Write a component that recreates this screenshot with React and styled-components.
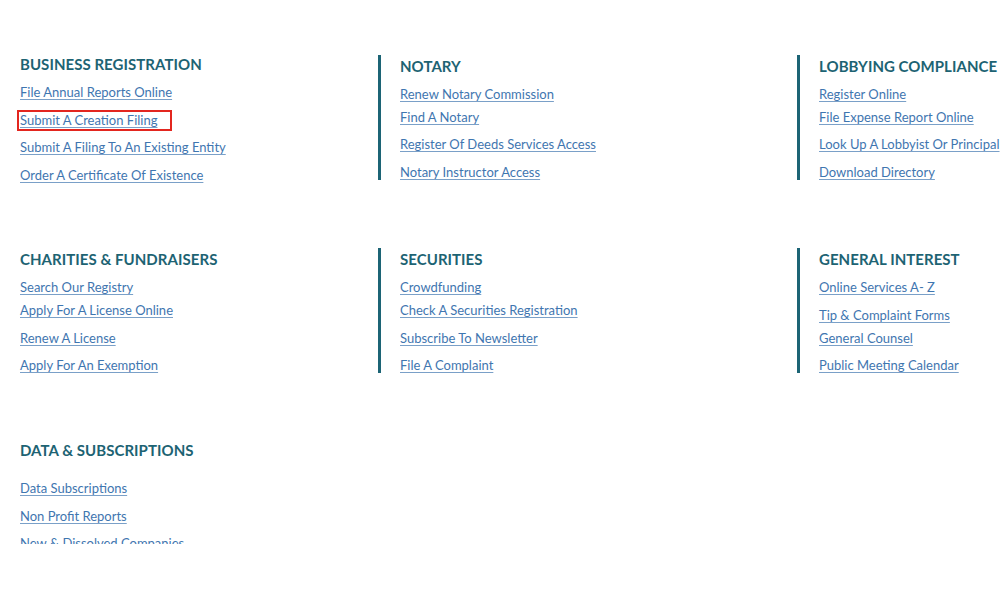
import React from "react";
import styled, { createGlobalStyle } from "styled-components";

const Global = createGlobalStyle`
  html, body { margin: 0; padding: 0; background: #ffffff; }
  body { font-family: Lato, "Open Sans", Arial, sans-serif; }
`;

const Viewport = styled.div`
  width: 1000px;
  height: 544px;
  overflow: hidden;
  background: #fff;
`;

const Grid = styled.div`
  display: grid;
  grid-template-columns: 358px 419px 1fr;
  grid-template-rows: 125px 125px auto;
  row-gap: 68px;
  padding: 55px 0 0 20px;
  white-space: nowrap;
`;

const Section = styled.section`
  display: flex;
  flex-direction: column;
  align-items: flex-start;
  align-self: start;
  padding-top: ${(p) => p.$top || 0}px;
  ${(p) =>
    p.$rule
      ? `border-left: 3px solid #1c6475; padding-left: 19px;`
      : ``}
`;

const Heading = styled.h2`
  margin: 0;
  font-size: 15px;
  line-height: 18px;
  font-weight: 700;
  letter-spacing: 0.05px;
  color: #1d6373;
  text-transform: uppercase;
`;

const Link = styled.a`
  position: relative;
  display: inline-block;
  margin-top: ${(p) => p.$gap}px;
  font-size: 13px;
  line-height: 16px;
  letter-spacing: 0;
  color: #3f76b0;
  text-decoration: underline;
  text-decoration-color: #7aa0c8;
  text-underline-offset: 2px;
  cursor: pointer;
  ${(p) =>
    p.$highlight
      ? `&::after {
          content: "";
          position: absolute;
          left: -3px;
          right: -15px;
          top: -2px;
          bottom: -3px;
          border: 2px solid #e3261f;
          pointer-events: none;
        }`
      : ``}
`;

const sections = [
  {
    title: "Business Registration",
    top: 0,
    links: [
      ["File Annual Reports Online", 11],
      ["Submit A Creation Filing", 12, true],
      ["Submit A Filing To An Existing Entity", 11],
      ["Order A Certificate Of Existence", 12],
    ],
  },
  {
    title: "Notary",
    rule: true,
    top: 2,
    links: [
      ["Renew Notary Commission", 11],
      ["Find A Notary", 7],
      ["Register Of Deeds Services Access", 11],
      ["Notary Instructor Access", 12],
    ],
  },
  {
    title: "Lobbying Compliance",
    rule: true,
    top: 2,
    links: [
      ["Register Online", 11],
      ["File Expense Report Online", 7],
      ["Look Up A Lobbyist Or Principal", 11],
      ["Download Directory", 12],
    ],
  },
  {
    title: "Charities & Fundraisers",
    top: 2,
    links: [
      ["Search Our Registry", 11],
      ["Apply For A License Online", 7],
      ["Renew A License", 12],
      ["Apply For An Exemption", 11],
    ],
  },
  {
    title: "Securities",
    rule: true,
    top: 2,
    links: [
      ["Crowdfunding", 11],
      ["Check A Securities Registration", 7],
      ["Subscribe To Newsletter", 12],
      ["File A Complaint", 11],
    ],
  },
  {
    title: "General Interest",
    rule: true,
    top: 2,
    links: [
      ["Online Services A- Z", 11],
      ["Tip & Complaint Forms", 12],
      ["General Counsel", 7],
      ["Public Meeting Calendar", 11],
    ],
  },
  {
    title: "Data & Subscriptions",
    top: 0,
    links: [
      ["Data Subscriptions", 21],
      ["Non Profit Reports", 12],
      ["New & Dissolved Companies", 11],
    ],
  },
];

export default function App() {
  return (
    <>
      <Global />
      <Viewport>
        <Grid>
          {sections.map((s) => (
            <Section key={s.title} $rule={s.rule} $top={s.top}>
              <Heading>{s.title}</Heading>
              {s.links.map(([label, gap, hl]) => (
                <Link key={label} $gap={gap} $highlight={hl}>
                  {label}
                </Link>
              ))}
            </Section>
          ))}
        </Grid>
      </Viewport>
    </>
  );
}
